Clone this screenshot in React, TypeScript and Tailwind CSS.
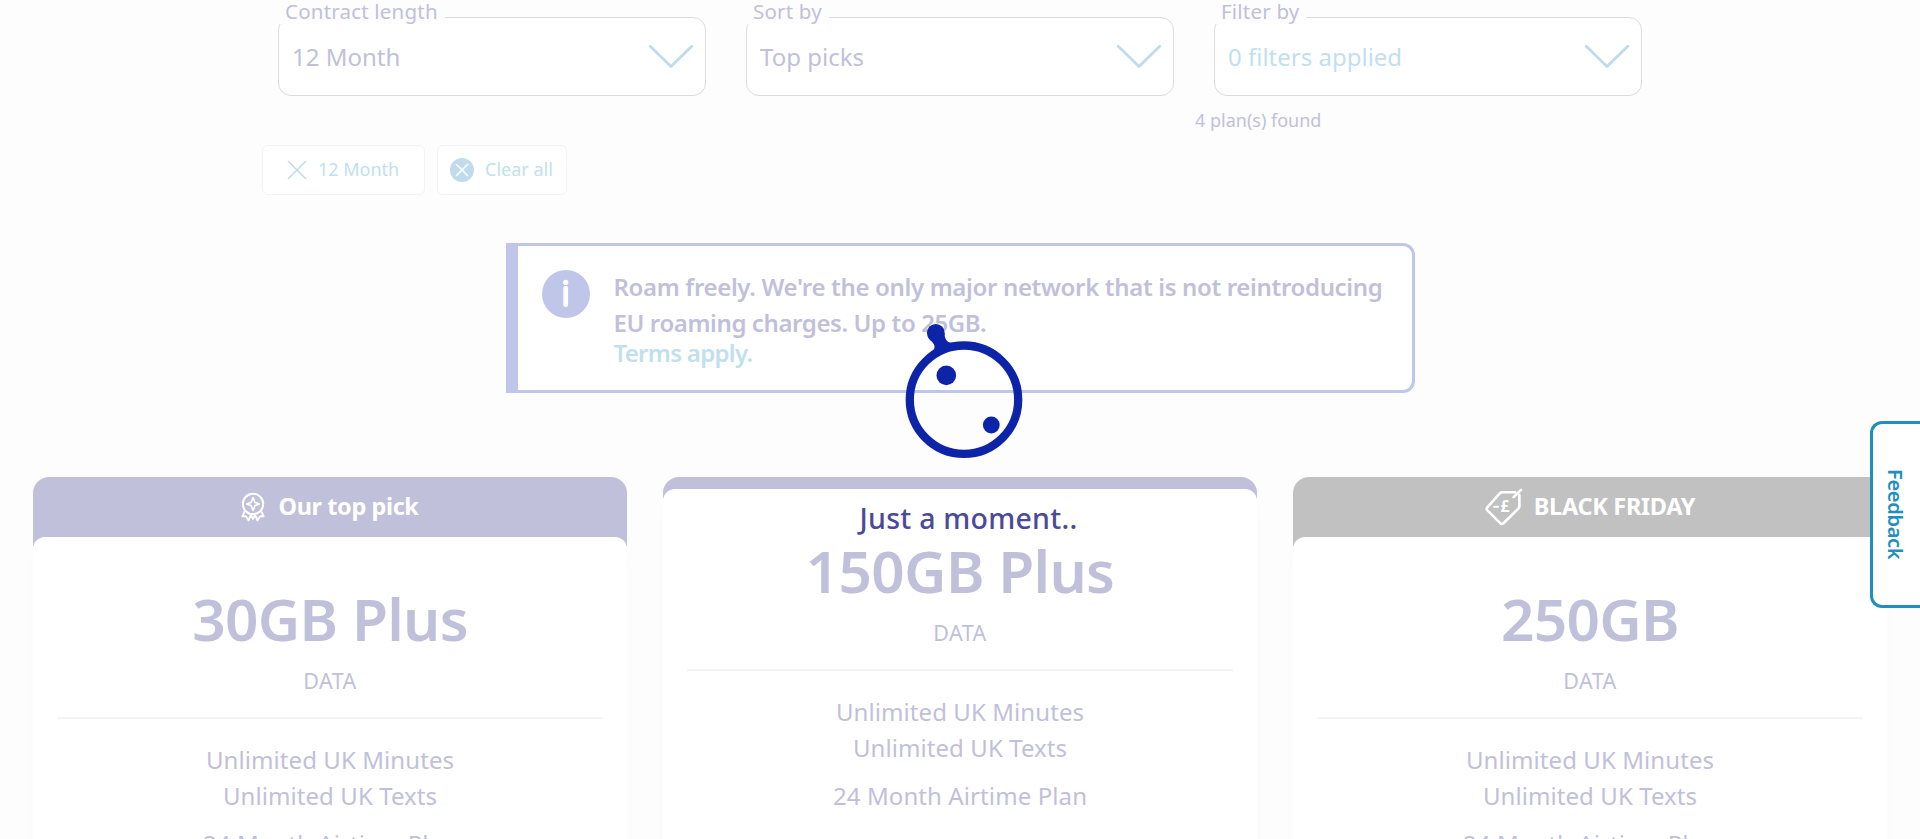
import React from "react";

function Chevron() {
  return (
    <svg width="46" height="26" viewBox="0 0 46 26" fill="none" stroke="#c0dcec" strokeWidth="2.8" strokeLinecap="round" strokeLinejoin="round">
      <path d="M2.2 2.2 23 22.6 43.8 2.2" />
    </svg>
  );
}

function Select({ label, value, link = false }: { label: string; value: string; link?: boolean }) {
  return (
    <div className="relative flex h-[79px] w-[428px] items-center justify-between rounded-[13px] border border-[#dcdcdc] bg-white pr-[11px] pl-[13px]">
      <span className="absolute -top-[18px] left-0 h-[24px] bg-[#fdfdfd] pr-[7px] pl-[6px] text-[20.5px] leading-[22px] tracking-[0.2px] whitespace-nowrap text-[#c1c0da]">
        {label}
      </span>
      <span className={link ? "text-[24px] leading-[36px] text-[#c1dfee]" : "text-[24px] leading-[36px] text-[#c1c0da]"}>{value}</span>
      <Chevron />
    </div>
  );
}

function Rosette() {
  return (
    <svg width="24" height="30" viewBox="0 0 24 30" fill="none" stroke="#fff" strokeWidth="2" strokeLinejoin="round">
      <circle cx="12" cy="12" r="10.2" />
      <path d="M12 5.6 13.8 10.2 18.4 12 13.8 13.8 12 18.4 10.2 13.8 5.6 12 10.2 10.2Z" strokeWidth="1.6" />
      <path d="M3.6 19.4 1.4 24.4 4.9 24.2 7.6 28.4 9.9 22.8M20.4 19.4 22.6 24.4 19.1 24.2 16.4 28.4 14.1 22.8M9.9 22.8 12 27 14.1 22.8" strokeWidth="1.8" />
    </svg>
  );
}

function PriceTag() {
  return (
    <svg width="38" height="38" viewBox="0 0 38 38" fill="none" stroke="#fff" strokeWidth="2.6" strokeLinecap="round" strokeLinejoin="round">
      <path d="M30 4.2H17.5Q16 4.2 15 5.2L2.3 19.4Q1 21 2.4 22.4L15.2 35.2Q16.8 36.6 18.4 35.2L33.4 20.6Q34.4 19.6 34.4 18.2V7" />
      <path d="M36 1.8 28.6 9.2" />
      <path d="M9 18.8h4" strokeWidth="2" />
      <text x="15.5" y="24" fill="#fff" stroke="none" fontSize="15.5" fontWeight="700">
        £
      </text>
    </svg>
  );
}

function PlanCard({ name, banner }: { name: string; banner?: "top" | "friday" }) {
  return (
    <section className={banner === "friday" ? "flex-1 rounded-t-[16px] bg-[#c1c1c1]" : "flex-1 rounded-t-[16px] bg-[#c1c0da]"}>
      {banner ? (
        <h3 className="flex h-[60px] items-center justify-center text-[23.5px] leading-[36px] font-bold text-white">
          {banner === "top" ? (
            <>
              <Rosette />
              <span className="ml-[13px] pb-[2px] tracking-[-0.4px]">Our top pick</span>
            </>
          ) : (
            <>
              <PriceTag />
              <span className="ml-[11px] pb-[2px] tracking-[-0.3px]">BLACK FRIDAY</span>
            </>
          )}
        </h3>
      ) : (
        <div className="h-[12px]" />
      )}
      <div className="h-[400px] rounded-t-[12px] bg-white px-[24px] pt-[45px] text-center text-[24px] leading-[36px] text-[#c1c0da] shadow-[0_12px_14px_rgba(0,0,0,0.015)]">
        <h2 className="text-[58.5px] leading-[72px] font-semibold tracking-[-0.7px]">{name}</h2>
        <p className="mt-[10px] text-[21.5px] leading-[33px] tracking-[0.5px]">DATA</p>
        <hr className="mt-[20px] h-[2px] border-0 bg-[#f4f4f4]" />
        <p className="mt-[23px] tracking-[0.08px]">
          Unlimited UK Minutes
          <br />
          Unlimited UK Texts
        </p>
        <p className="mt-[12px] tracking-[0.1px]">24 Month Airtime Plan</p>
      </div>
    </section>
  );
}

function Loader() {
  return (
    <div className="absolute inset-0 flex flex-col items-center pt-[320px] pl-[8px]">
      <svg width="124" height="142" viewBox="902 320 124 142" fill="#0d24a8">
        <circle cx="964" cy="399.7" r="54.2" fill="none" stroke="#0d24a8" strokeWidth="8.3" />
        <circle cx="946.3" cy="375.4" r="9.8" />
        <circle cx="991.3" cy="425" r="8.4" />
        <circle cx="935.8" cy="332.8" r="8.9" />
        <path d="M927.6 336.5C929.5 341 935 342.5 934.5 347.5C934 351 930 353 926 356L940 354L956 343C949 343.5 944.5 341.5 944.6 333Z" />
      </svg>
      <p className="mt-[38px] pl-[9px] text-[28.5px] leading-[36px] font-medium tracking-[0.25px] text-[#4b4a97]">Just a moment..</p>
    </div>
  );
}

export default function App() {
  return (
    <div className="relative h-[839px] overflow-hidden bg-[#fdfdfd] font-['Noto_Sans','Open_Sans',sans-serif]">
      <main>
        <div className="flex justify-center gap-[40px] pt-[17px]">
          <Select label="Contract length" value="12 Month" />
          <Select label="Sort by" value="Top picks" />
          <Select label="Filter by" value="0 filters applied" link />
        </div>

        <p className="pt-[11px] pl-[1195px] text-[18px] leading-[27px] text-[#c1c0da]">4 plan(s) found</p>

        <div className="flex gap-[12px] pt-[11px] pl-[262px] text-[18px] leading-[27px] text-[#c1dfee]">
          <button className="flex h-[50px] w-[163px] items-center rounded-[6px] border border-[#f3f3f3] bg-white pl-[24px]">
            <svg width="20" height="20" viewBox="0 0 20 20" stroke="#c0dcec" strokeWidth="1.6">
              <path d="M1 1 19 19M19 1 1 19" />
            </svg>
            <span className="ml-[11px] pb-px">12 Month</span>
          </button>
          <button className="flex h-[50px] w-[130px] items-center rounded-[6px] border border-[#f3f3f3] bg-white pl-[12px]">
            <svg width="24" height="24" viewBox="0 0 24 24">
              <circle cx="12" cy="12" r="12" fill="#c0dcec" />
              <path d="M6 6 18 18M18 6 6 18" stroke="#fff" strokeWidth="1.6" />
            </svg>
            <span className="ml-[11px] pb-px">Clear all</span>
          </button>
        </div>

        <div className="mx-auto mt-[48px] flex h-[150px] w-[909px] rounded-r-[12px] border-[3px] border-l-[12px] border-[#c0c6e9] bg-white pt-[24px] pl-[24px]">
          <svg width="48" height="48" viewBox="0 0 48 48" fill="#fff" className="shrink-0">
            <circle cx="24" cy="24" r="24" fill="#c0c6e9" />
            <circle cx="23.7" cy="12.4" r="2.6" />
            <rect x="21.3" y="16" width="4.8" height="21" rx="2" />
          </svg>
          <div className="-mt-px ml-[24px] text-[24px] leading-[36px] font-semibold tracking-[-0.34px] whitespace-nowrap text-[#c1c0da]">
            <p>
              Roam freely. We're the only major network that is not reintroducing
              <br />
              <span className="tracking-[-0.4px]">EU roaming charges. Up to 25GB.</span>
            </p>
            <a className="-mt-[3px] block leading-[30px] tracking-[-0.7px] text-[#c1dfee]">Terms apply.</a>
          </div>
        </div>

        <div className="mt-[84px] flex gap-[36px] px-[33px]">
          <PlanCard name="30GB Plus" banner="top" />
          <PlanCard name="150GB Plus" />
          <PlanCard name="250GB" banner="friday" />
        </div>
      </main>

      <Loader />

      <button className="absolute top-[421px] right-0 flex h-[187px] w-[50px] items-center justify-center rounded-l-[12px] border-[3px] border-r-0 border-[#1f8fc0] bg-white pr-[3px] [writing-mode:vertical-rl]">
        <span className="text-[20px] leading-[24px] font-semibold tracking-[-0.3px] text-[#1f8fc0]">Feedback</span>
      </button>
    </div>
  );
}
